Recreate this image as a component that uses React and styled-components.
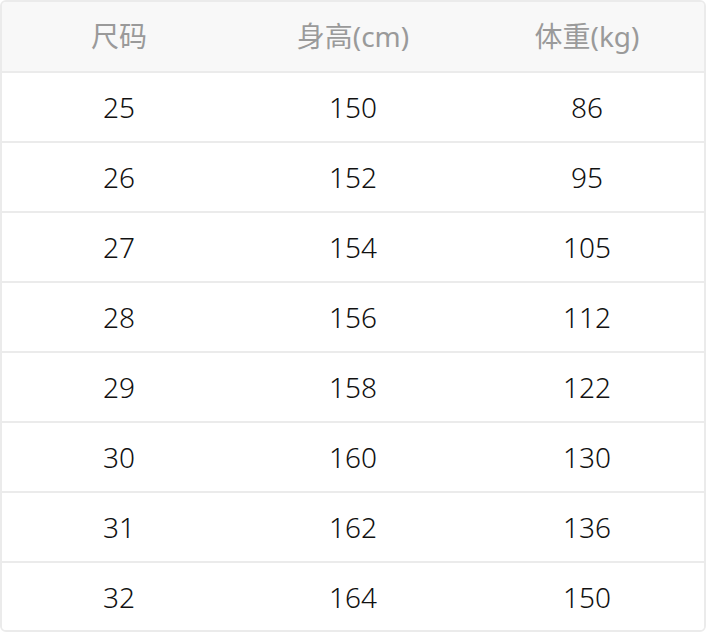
import React from 'react';
import styled, { createGlobalStyle } from 'styled-components';

const GlobalStyle = createGlobalStyle`
  html, body {
    margin: 0;
    padding: 0;
    background: #fff;
  }
  body {
    font-family: "Noto Sans", "Noto Sans CJK SC", sans-serif;
  }
`;

const Wrapper = styled.div`
  width: 706px;
  height: 632px;
  box-sizing: border-box;
  border: 2px solid #ebebeb;
  border-radius: 6px;
  overflow: hidden;
  display: flex;
  flex-direction: column;
`;

const Row = styled.div`
  display: grid;
  grid-template-columns: 1fr 1fr 1fr;
  height: ${p => (p.$head ? '69px' : '68px')};
  background: ${p => (p.$head ? '#f8f8f8' : '#fff')};
  border-top: ${p => (p.$first ? 'none' : '2px solid #ebebeb')};
  flex-shrink: 0;
`;

const Cell = styled.div`
  display: flex;
  align-items: center;
  justify-content: center;
  font-size: 28px;
  font-weight: ${p => (p.$head ? 400 : 300)};
  padding-bottom: ${p => (p.$head ? '3px' : '0')};
  color: ${p => (p.$head ? '#9a9a9a' : '#111')};
`;

const headers = ['尺码', '身高(cm)', '体重(kg)'];

const rows = [
  [25, 150, 86],
  [26, 152, 95],
  [27, 154, 105],
  [28, 156, 112],
  [29, 158, 122],
  [30, 160, 130],
  [31, 162, 136],
  [32, 164, 150],
];

export default function App() {
  return (
    <>
      <GlobalStyle />
      <Wrapper>
        <Row $head $first>
          {headers.map(h => (
            <Cell $head key={h}>{h}</Cell>
          ))}
        </Row>
        {rows.map(r => (
          <Row key={r[0]}>
            {r.map((v, i) => (
              <Cell key={i}>{v}</Cell>
            ))}
          </Row>
        ))}
      </Wrapper>
    </>
  );
}
